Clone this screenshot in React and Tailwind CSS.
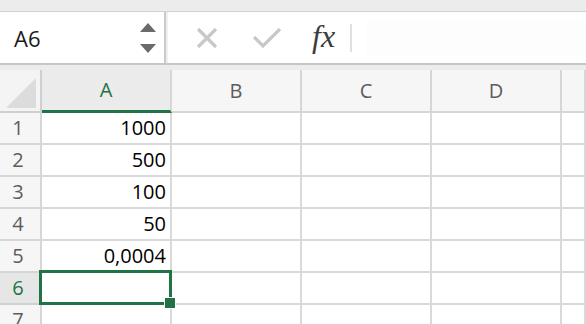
import React from "react";

const cols = ["A", "B", "C", "D", ""];
const data = { 1: "1000", 2: "500", 3: "100", 4: "50", 5: "0,0004" };

export default function App() {
  const rows = [1, 2, 3, 4, 5, 6, 7];
  return (
    <div
      className="w-[586px] h-[324px] overflow-hidden bg-white"
      style={{ fontFamily: '"Open Sans", "Noto Sans", sans-serif' }}
    >
      {/* top strip */}
      <div className="h-[12px] bg-[#ececec] border-b border-[#d2d2d2]" />
      {/* name box + formula bar */}
      <div className="flex h-[51px]">
        <div className="w-[166px] bg-white border-r-2 border-[#c9c9c9] flex items-center justify-between pl-[14px] pr-[8px]">
          <span className="text-[22px] text-[#1a1a1a] leading-none">A6</span>
          <svg width="16" height="30" viewBox="0 0 16 30">
            <polygon points="8,0 16,9 0,9" fill="#6a6a6a" />
            <polygon points="0,21 16,21 8,30" fill="#6a6a6a" />
          </svg>
        </div>
        <div className="w-[2px] bg-[#f0f0f0]" />
        <div className="flex-1 bg-white flex items-center">
          <svg className="ml-[28px]" width="22" height="22" viewBox="0 0 22 22">
            <path d="M2 2 L20 20 M20 2 L2 20" stroke="#c8c8c8" strokeWidth="3.2" fill="none" />
          </svg>
          <svg className="ml-[34px]" width="30" height="22" viewBox="0 0 30 22">
            <path d="M2 10 L11 19 L28 2" stroke="#c8c8c8" strokeWidth="3.2" fill="none" />
          </svg>
          <span
            className="ml-[30px] text-[32px] italic text-[#3c3c3c] leading-none -mt-[4px]"
            style={{ fontFamily: '"Liberation Serif", "DejaVu Serif", serif' }}
          >
            fx
          </span>
          <div className="ml-[15px] w-[2px] h-[28px] bg-[#e0e0e0]" />
          <div className="ml-[14px] flex-1 h-[36px] bg-[#fdfdfd]" />
        </div>
      </div>
      <div className="h-[2px] bg-[#c6c6c6]" />
      <div className="h-[5px] bg-[#ececec]" />
      {/* grid */}
      <div className="grid grid-cols-[42px_130px_130px_130px_130px_1fr] grid-rows-[43px_repeat(7,32px)]">
        <div className="bg-[#f4f4f4] border-r-2 border-b-2 border-[#cfcfcf] relative">
          <svg className="absolute left-[6px] top-[8px]" width="30" height="30" viewBox="0 0 30 30">
            <polygon points="30,0 30,30 0,30" fill="#dcdcdc" />
          </svg>
        </div>
        {cols.map((c, i) => (
          <div
            key={c + i}
            className={
              i === 0
                ? "bg-[#ebebeb] border-r-2 border-[#d6d6d6] border-b-[3px] border-b-[#217346] flex items-center justify-center text-[20px] text-[#217346]"
                : "bg-[#f6f6f6] border-r-2 border-b-2 border-[#d6d6d6] flex items-center justify-center text-[20px] text-[#5c5c5c]"
            }
          >
            {c}
          </div>
        ))}
        {rows.map((r) => (
          <React.Fragment key={r}>
            <div
              className={
                r === 6
                  ? "bg-[#e6e6e6] border-r-2 border-b-2 border-[#d0d0d0] flex items-center justify-center pr-[4px] text-[20px] text-[#217346]"
                  : "bg-[#f6f6f6] border-r-2 border-b-2 border-[#d6d6d6] flex items-center justify-center pr-[4px] text-[20px] text-[#5c5c5c]"
              }
            >
              {r}
            </div>
            {cols.map((c, i) => (
              <div
                key={r + c + i}
                className="relative border-r-2 border-b-2 border-[#d9d9d9] flex items-center justify-end pr-[4px] text-[20px] text-black"
              >
                {i === 0 ? data[r] || "" : ""}
                {i === 0 && r === 6 && (
                  <div className="absolute left-[-3px] top-[-3px] right-[-2px] bottom-[-2px] border-[3px] border-[#217346] z-10">
                    <div className="absolute right-[-7px] bottom-[-7px] w-[12px] h-[12px] bg-[#217346] border border-white" />
                  </div>
                )}
              </div>
            ))}
          </React.Fragment>
        ))}
      </div>
    </div>
  );
}
